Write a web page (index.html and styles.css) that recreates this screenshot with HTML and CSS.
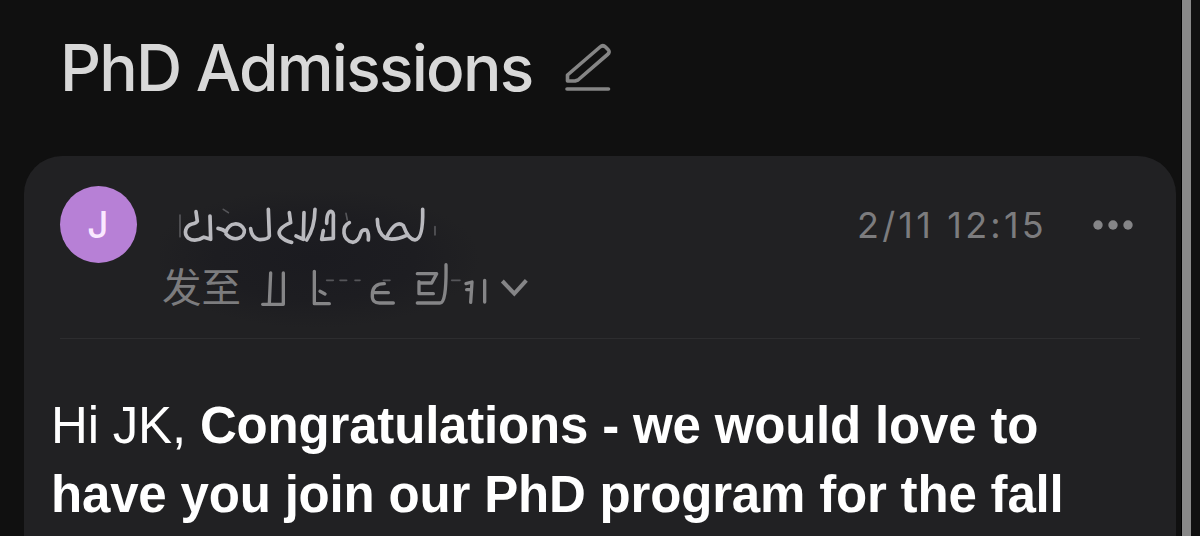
FILE: index.html
```html
<!DOCTYPE html>
<html lang="zh">
<head>
    <meta charset="UTF-8">
    <meta name="viewport" content="width=device-width, initial-scale=1.0">
    <title>PhD Admissions</title>
    <link rel="stylesheet" href="styles.css">
</head>
<body>
    <div class="screen">
        <header class="subject">
            <h1>PhD Admissions</h1>
            <svg class="edit-icon" viewBox="0 0 48 50" width="48" height="50">
                <path d="M3.500 32 L36 4 Q39 1.500 41.500 4 L44 6.500 Q46.500 9 43.500 11.500 L14 37 L11 38 H3.500 Z"/>
                <path d="M3 46 H44.500"/>
            </svg>
        </header>
        <main class="card">
            <div class="sender">
                <div class="avatar">J</div>
                <div class="details">
                    <svg class="name" viewBox="0 0 870 180" width="290" height="60">
                        <path class="faint" d="M60 75 V140 M190 58 L205 68 M825 110 V135 M558 70 L562 90"/>
                        <path d="M108 65 L112 94 Q108 100 96 102 C76 108 70 130 84 144 Q105 158 130 142 M150 78 L152 148 L132 142"/>
                        <path d="M174 115 Q190 118 198 126 C208 96 240 94 253 120 C256 144 222 158 198 132"/>
                        <path d="M272 116 Q275 145 300 149 Q325 148 328 138 L325 58"/>
                        <path d="M388 68 L392 98 Q345 118 362 140 Q375 153 395 157 M432 68 L430 148 L408 138 M465 58 Q464 115 440 150"/>
                        <path d="M500 100 Q500 65 513 64 Q522 66 520 85 V145 L485 148 L490 122"/>
                        <path d="M568 98 C544 110 546 150 578 157 Q596 155 602 130 Q605 118 620 120 Q627 130 625 150"/>
                        <path d="M652 88 Q652 130 678 145 Q705 152 740 136 M682 138 Q708 88 730 107 Q745 148 765 150 Q790 148 788 58"/>
                    </svg>
                    <div class="recipient">
                        <span>发至</span>
                        <svg viewBox="246 220 864 135" width="288" height="45">
                            <path class="faint" d="M500 272 H520 M540 272 H560 M585 272 H600 M670 272 H690 M875 272 H900"/>
                            <path d="M332 250 L328 342 M308 344 H370 V250 M463 245 V342 H508 M480 305 L495 313"/>
                            <path d="M673 282 Q637 282 637 315 Q635 341 660 340 H700 M645 309 H685"/>
                            <path d="M772 252 H830 L815 280 H780 M777 276 V312 H820 M772 340 H840 Q860 340 858 225"/>
                            <path d="M918 282 L936 277 L932 338 M920 300 H934 M974 272 V337"/>
                            <path class="chevron" d="M1027 274 L1063 312 L1099 272"/>
                        </svg>
                    </div>
                </div>
                <time>2/11 12:15</time>
                <svg class="more" viewBox="0 0 40 10" width="40" height="10">
                    <circle cx="5" cy="5" r="4.700"/>
                    <circle cx="20" cy="5" r="4.700"/>
                    <circle cx="35" cy="5" r="4.700"/>
                </svg>
            </div>
            <p class="message">Hi JK, <b>Congratulations - we would love to<br>have you join our PhD program for the fall</b></p>
        </main>
    </div>
    <div class="scrollbar"></div>
</body>
</html>
```
FILE: styles.css
```css
body {
    margin: 0;
    height: 536px;
    display: flex;
    overflow: hidden;
    background-color: #101010;
    font-family: Inter, "Noto Sans CJK SC", sans-serif;
}

.screen {
    width: 1182px;
    box-sizing: border-box;
    padding: 0 6px 0 24px;
}

.scrollbar {
    width: 9px;
    background-color: #888888;
    box-shadow: -1px 0 #000000;
}

.subject {
    display: flex;
    height: 156px;
    gap: 32px;
    padding-left: 36px;
    box-sizing: border-box;
}

h1 {
    margin: 29px 0 0;
    font-size: 64px;
    line-height: 78px;
    font-weight: 500;
    letter-spacing: -1.75px;
    color: #d8d8d8;
    white-space: nowrap;
}

svg {
    fill: none;
    stroke-linecap: round;
    stroke-linejoin: round;
}

.edit-icon {
    margin-top: 43px;
    stroke: #858585;
    stroke-width: 3.6;
}

.card {
    height: 400px;
    background-color: #212123;
    border-radius: 38px 38px 0 0;
}

.sender {
    display: flex;
    height: 182px;
    margin: 0 36px;
    border-bottom: 1px solid #2d2d2f;
}

.avatar {
    width: 77px;
    height: 77px;
    margin-top: 30px;
    border-radius: 50%;
    background-color: #b780d6;
    color: #fae8ff;
    font-size: 37px;
    line-height: 78px;
    font-weight: 500;
    text-align: center;
    text-indent: -1px;
}

.details {
    width: 390px;
    height: 148px;
    margin-top: 34px;
    margin-left: 23px;
    background: radial-gradient(ellipse 165px 70px at 155px 68px, #1b1b20, #1d1d21 60%, transparent);
}

.name {
    display: block;
    stroke: #b9b9be;
    stroke-width: 11;
}

.recipient {
    display: flex;
    height: 60px;
    padding-left: 2px;
    align-items: center;
    color: #7c7c7e;
    font-size: 39.5px;
}

.recipient span {
    width: 80px;
    line-height: 60px;
    margin-top: 16px;
}

.recipient svg {
    stroke: #858587;
    stroke-width: 10;
    margin-top: 11px;
}

.name .faint,
.recipient .faint {
    stroke: #56565a;
    stroke-width: 5;
}

.recipient .chevron {
    stroke-width: 12;
    stroke-linecap: butt;
    stroke-linejoin: miter;
}

time {
    width: 190px;
    margin-top: 47px;
    margin-left: 307px;
    color: #7c7c7e;
    font-size: 36px;
    line-height: 44px;
    letter-spacing: 3.2px;
    white-space: nowrap;
}

.more {
    margin-top: 64px;
    margin-left: 46px;
    fill: #858587;
}

.message {
    margin: 53px 0 0 27px;
    color: #ffffff;
    font-family: "Liberation Sans", Arial, sans-serif;
    font-size: 51px;
    line-height: 68.5px;
    letter-spacing: -0.18px;
    white-space: nowrap;
}
```
